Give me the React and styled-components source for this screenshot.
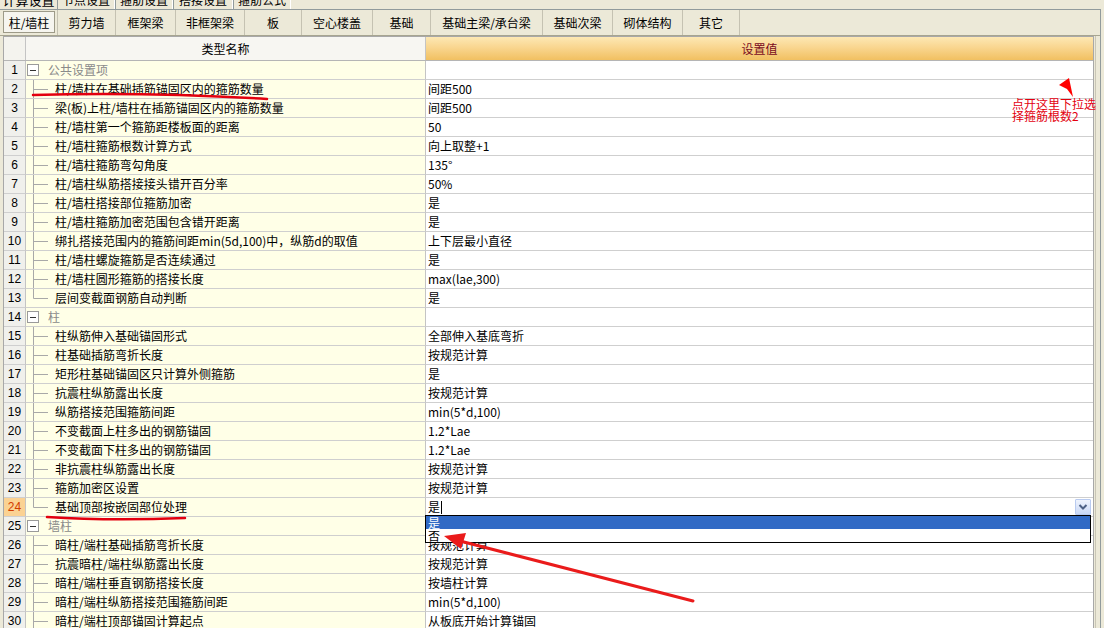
import React from 'react'
import styled, { createGlobalStyle } from 'styled-components'

const GlobalStyle = createGlobalStyle`
  html, body { margin: 0; padding: 0; }
  body {
    background: #ece9d8;
    font-family: "Noto Sans CJK SC", "Liberation Sans", sans-serif;
    font-size: 12px;
    color: #000;
  }
`

const topTabs = [
  { label: '计算设置', width: 57, active: true },
  { label: '节点设置', width: 58 },
  { label: '箍筋设置', width: 58 },
  { label: '搭接设置', width: 60 },
  { label: '箍筋公式', width: 58 },
]

const subTabs = [
  { label: '柱/墙柱', width: 58, active: true },
  { label: '剪力墙', width: 58 },
  { label: '框架梁', width: 60 },
  { label: '非框架梁', width: 69 },
  { label: '板', width: 57 },
  { label: '空心楼盖', width: 71 },
  { label: '基础', width: 58 },
  { label: '基础主梁/承台梁', width: 112 },
  { label: '基础次梁', width: 70 },
  { label: '砌体结构', width: 70 },
  { label: '其它', width: 57 },
]

const rows = [
  { group: '公共设置项' },
  { name: '柱/墙柱在基础插筋锚固区内的箍筋数量', value: '间距500' },
  { name: '梁(板)上柱/墙柱在插筋锚固区内的箍筋数量', value: '间距500' },
  { name: '柱/墙柱第一个箍筋距楼板面的距离', value: '50' },
  { name: '柱/墙柱箍筋根数计算方式', value: '向上取整+1' },
  { name: '柱/墙柱箍筋弯勾角度', value: '135°' },
  { name: '柱/墙柱纵筋搭接接头错开百分率', value: '50%' },
  { name: '柱/墙柱搭接部位箍筋加密', value: '是' },
  { name: '柱/墙柱箍筋加密范围包含错开距离', value: '是' },
  { name: '绑扎搭接范围内的箍筋间距min(5d,100)中，纵筋d的取值', value: '上下层最小直径' },
  { name: '柱/墙柱螺旋箍筋是否连续通过', value: '是' },
  { name: '柱/墙柱圆形箍筋的搭接长度', value: 'max(lae,300)' },
  { name: '层间变截面钢筋自动判断', value: '是', last: true },
  { group: '柱' },
  { name: '柱纵筋伸入基础锚固形式', value: '全部伸入基底弯折' },
  { name: '柱基础插筋弯折长度', value: '按规范计算' },
  { name: '矩形柱基础锚固区只计算外侧箍筋', value: '是' },
  { name: '抗震柱纵筋露出长度', value: '按规范计算' },
  { name: '纵筋搭接范围箍筋间距', value: 'min(5*d,100)' },
  { name: '不变截面上柱多出的钢筋锚固', value: '1.2*Lae' },
  { name: '不变截面下柱多出的钢筋锚固', value: '1.2*Lae' },
  { name: '非抗震柱纵筋露出长度', value: '按规范计算' },
  { name: '箍筋加密区设置', value: '按规范计算' },
  { name: '基础顶部按嵌固部位处理', value: '是', editing: true, last: true },
  { group: '墙柱' },
  { name: '暗柱/端柱基础插筋弯折长度', value: '按规范计算' },
  { name: '抗震暗柱/端柱纵筋露出长度', value: '按规范计算' },
  { name: '暗柱/端柱垂直钢筋搭接长度', value: '按墙柱计算' },
  { name: '暗柱/端柱纵筋搭接范围箍筋间距', value: 'min(5*d,100)' },
  { name: '暗柱/端柱顶部锚固计算起点', value: '从板底开始计算锚固' },
]

function Connector({ last }) {
  return (
    <svg width="29" height="18" viewBox="0 0 29 18">
      <line x1="7.5" y1="0" x2="7.5" y2={last ? 9.5 : 18} stroke="#a8a8a8" />
      <line x1="7.5" y1="9.5" x2="22" y2="9.5" stroke="#a8a8a8" />
    </svg>
  )
}

function MinusBox() {
  return (
    <svg width="13" height="13" viewBox="0 0 13 13">
      <rect x="0.5" y="0.5" width="11" height="11" fill="#fff" stroke="#9a9a9a" />
      <line x1="3" y1="6.5" x2="9" y2="6.5" stroke="#333" />
    </svg>
  )
}

function App() {
  return (
    <Page>
      <GlobalStyle />
      <TopStrip>
        {topTabs.map((t, i) => (
          <TopTab key={i} width={t.width} active={t.active}><TopTabText>{t.label}</TopTabText></TopTab>
        ))}
      </TopStrip>
      <Panel>
        <SubTabs>
          {subTabs.map((t, i) => (
            <SubTab key={i} width={t.width}>
              <SubTabLabel active={t.active}>{t.label}</SubTabLabel>
            </SubTab>
          ))}
        </SubTabs>
        <Body>
          <Grid>
            <HeaderRow>
              <NumHead />
              <NameHead>类型名称</NameHead>
              <ValueHead>设置值</ValueHead>
            </HeaderRow>
            {rows.map((r, i) => (
              <Row key={i}>
                <NumCell current={r.editing}>{i + 1}</NumCell>
                <NameCell>
                  {r.group ? (
                    <>
                      <BoxWrap><MinusBox /></BoxWrap>
                      <GroupText>{r.group}</GroupText>
                    </>
                  ) : (
                    <>
                      <Connector last={r.last} />
                      <span>{r.name}</span>
                    </>
                  )}
                </NameCell>
                <ValueCell>
                  {r.editing ? (
                    <>
                      <EditText>{r.value}<Caret /></EditText>
                      <DropButton>
                        <svg width="10" height="8" viewBox="0 0 10 8">
                          <path d="M1.5 2 L5 5.5 L8.5 2" fill="none" stroke="#4d6185" strokeWidth="2" />
                        </svg>
                      </DropButton>
                      <DropList>
                        <Option selected>是</Option>
                        <Option>否</Option>
                      </DropList>
                    </>
                  ) : r.value}
                </ValueCell>
              </Row>
            ))}
          </Grid>
          <Edge />
        </Body>
      </Panel>

      <Overlay width="1104" height="628" viewBox="0 0 1104 628">
        <path d="M33 95 Q150 92 267 99" fill="none" stroke="#e3000f" strokeWidth="2.5" strokeLinecap="round" />
        <path d="M47 517 Q110 521 185 518" fill="none" stroke="#e3000f" strokeWidth="2.5" strokeLinecap="round" />
        <polygon points="1059,85 1069,78 1073,97 1067,89" fill="#f00" />
        <line x1="693" y1="601" x2="460" y2="541" stroke="#ea1b1b" strokeWidth="3" strokeLinecap="round" />
        <polygon points="444,536 466,533 461,549" fill="#ea1b1b" />
      </Overlay>
      <Note>点开这里下拉选<br />择箍筋根数2</Note>
    </Page>
  )
}

const Page = styled.div`
  position: relative;
  width: 1104px;
  height: 628px;
  overflow: hidden;
`

const TopStrip = styled.div`
  display: flex;
  height: 9px;
  overflow: hidden;
`

const TopTab = styled.div`
  width: ${props => props.width}px;
  box-sizing: border-box;
  border-left: ${props => props.active ? 'none' : '1px solid #919b9c'};
  border-right: ${props => props.active ? 'none' : '1px solid #fff'};
  text-align: center;
  font-size: ${props => props.active ? '13px' : '12px'};
  line-height: 14px;
`

const TopTabText = styled.span`
  display: block;
  margin-top: -7px;
`

const Panel = styled.div`
  width: 1101px;
  height: 619px;
  box-sizing: border-box;
  border-top: 1px solid #919b9c;
  border-right: 1px solid #919b9c;
  display: flex;
  flex-direction: column;
`

const SubTabs = styled.div`
  display: flex;
  align-items: stretch;
  height: 26px;
  box-sizing: border-box;
  border-bottom: 1px solid #a7a591;
`

const SubTab = styled.div`
  width: ${props => props.width}px;
  box-sizing: border-box;
  display: flex;
  padding: 1px 0 2px;
  border-right: 1px solid #c5c2b2;

  &:first-child {
    padding: 1px 2px 2px 3px;
  }
`

const SubTabLabel = styled.div`
  flex: 1;
  display: flex;
  align-items: center;
  justify-content: center;
  font-size: 12px;
  border: ${props => props.active ? '1px solid #9d9a88' : 'none'};
  background: ${props => props.active ? '#f6f5ef' : 'transparent'};
`

const Body = styled.div`
  flex: 1;
  display: flex;
  padding: 0 0 0 3px;
  min-height: 0;
`

const Grid = styled.div`
  width: 1091px;
  box-sizing: border-box;
  border: 1px solid #a8a8a8;
  border-bottom: none;
  background: #fff;
  overflow: hidden;
`

const Edge = styled.div`
  width: 1px;
  margin-left: 1px;
  background: #c9c6b6;
`

const HeaderRow = styled.div`
  display: grid;
  grid-template-columns: 22px 400px 667px;
  height: 24px;
  box-sizing: border-box;
  border-bottom: 1px solid #b5b5b5;
`

const NumHead = styled.div`
  background: #f4f3ee;
  border-right: 1px solid #c4c4c4;
`

const NameHead = styled.div`
  background: #f7f6f2;
  border-right: 1px solid #c4c4c4;
  display: flex;
  align-items: center;
  justify-content: center;
`

const ValueHead = styled.div`
  background: linear-gradient(#fde8b4, #f9d690 45%, #f1c061);
  color: #7a0a1e;
  display: flex;
  align-items: center;
  justify-content: center;
`

const Row = styled.div`
  display: grid;
  grid-template-columns: 22px 400px 667px;
  height: 19px;
`

const NumCell = styled.div`
  box-sizing: border-box;
  background: ${props => props.current ? '#fbd293' : '#f0f0ec'};
  color: ${props => props.current ? '#d23c00' : '#000'};
  border-right: 1px solid #c4c4c4;
  border-bottom: 1px solid #cfcfcf;
  text-align: center;
  line-height: 18px;
  font-family: "Liberation Sans", sans-serif;
  font-size: 12px;
`

const NameCell = styled.div`
  box-sizing: border-box;
  background: #ffffe7;
  border-right: 1px solid #c4c4c4;
  border-bottom: 1px solid #cfcfcf;
  display: flex;
  align-items: center;
  white-space: nowrap;
  overflow: hidden;
  line-height: 18px;
`

const BoxWrap = styled.div`
  display: flex;
  margin-left: 1px;
  margin-right: 8px;
`

const GroupText = styled.span`
  color: #8a8a8a;
`

const ValueCell = styled.div`
  position: relative;
  box-sizing: border-box;
  background: #fff;
  border-bottom: 1px solid #cfcfcf;
  display: flex;
  align-items: center;
  padding-left: 2px;
  white-space: nowrap;
  line-height: 18px;
`

const EditText = styled.span`
  flex: 1;
  display: flex;
  align-items: center;
`

const Caret = styled.span`
  display: inline-block;
  width: 1px;
  height: 13px;
  margin-left: 1px;
  background: #000;
`

const DropButton = styled.div`
  width: 16px;
  height: 16px;
  box-sizing: border-box;
  margin-right: 2px;
  border: 1px solid #b9cbf0;
  border-radius: 1px;
  background: linear-gradient(#eef3fd, #c9d8f6);
  display: flex;
  align-items: center;
  justify-content: center;
`

const DropList = styled.div`
  position: absolute;
  left: -1px;
  top: 17px;
  width: 666px;
  box-sizing: border-box;
  border: 1px solid #000;
  background: #fff;
  z-index: 5;
`

const Option = styled.div`
  height: 13px;
  line-height: 13px;
  padding-left: 2px;
  background: ${props => props.selected ? '#316ac5' : '#fff'};
  color: ${props => props.selected ? '#fff' : '#000'};
`

const Overlay = styled.svg`
  position: absolute;
  left: 0;
  top: 0;
  pointer-events: none;
  z-index: 10;
`

const Note = styled.div`
  position: absolute;
  left: 1012px;
  top: 98px;
  color: #e3000f;
  font-size: 12px;
  line-height: 12px;
  white-space: nowrap;
  z-index: 11;
`

export default App
